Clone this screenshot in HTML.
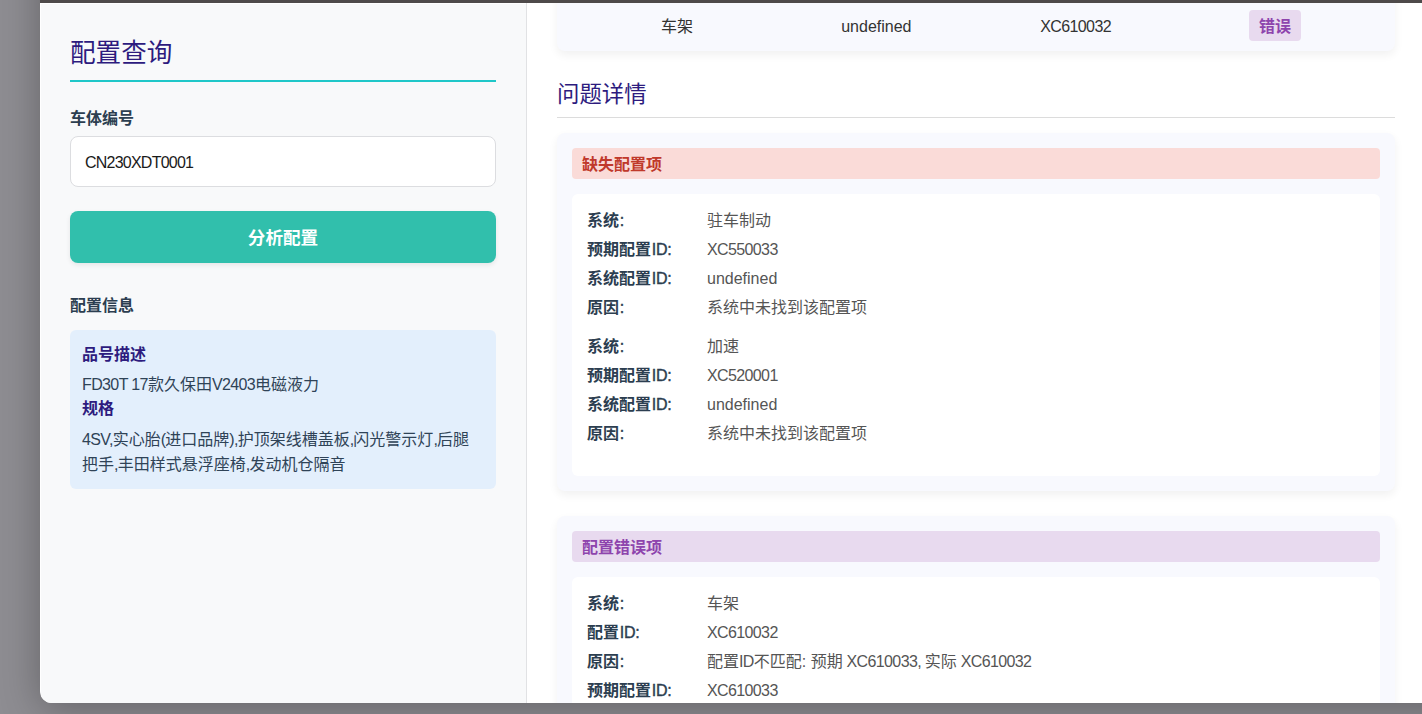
<!DOCTYPE html>
<html lang="zh-CN">
<head>
<meta charset="utf-8">
<title>配置查询</title>
<style>
*{box-sizing:border-box;margin:0;padding:0}
html,body{width:1422px;height:714px;overflow:hidden}
body{position:relative;background:#8e8d92;font-family:"Liberation Sans","Noto Sans CJK SC",sans-serif;font-size:16px;line-height:25.6px;color:#2c3e50}
.u{letter-spacing:-.62px}
.q{letter-spacing:-.75px}
b .u{font-weight:400;-webkit-text-stroke:.4px currentColor;margin-left:.8px;letter-spacing:-.3px}
.cj{font-family:"Liberation Sans","Noto Sans CJK SC",sans-serif;white-space:nowrap}
.modal{position:absolute;left:40px;top:-60px;width:1460px;height:762.6px;background:#fff;border-radius:12px;box-shadow:0 6px 40px rgba(0,0,0,.30);overflow:hidden}
.mhead{position:absolute;left:0;top:0;width:100%;height:62.8px;background:#4e4a4a;z-index:5}
/* everything below is positioned in viewport coordinates through .vp */
.vp{position:absolute;left:-40px;top:60px;width:1500px;height:703px}
.left{position:absolute;left:41px;top:4px;width:485px;height:700px;background:#f8f9fa}
.divider{position:absolute;left:526px;top:3px;width:1px;height:700px;background:#e1e2e4}
h2.title{position:absolute;left:70px;top:31px;width:426px;height:51px;font-size:25.6px;line-height:45px;font-weight:400;color:#2d1b7e;border-bottom:2px solid #1fc7c8}
.lbl{position:absolute;left:70px;font-weight:700;color:#2c3e50;font-size:16px;line-height:26px}
.input{position:absolute;left:70px;top:136px;width:426px;height:50.6px;border:1px solid #dcdde0;border-radius:8px;background:#fff;padding:0 14px;line-height:52.8px;color:#1a1a1a;font-size:16px;overflow:hidden}
.input .u{letter-spacing:-.77px}
.btn{position:absolute;left:70px;top:211px;width:426px;height:52px;border-radius:8px;background:#31bfac;color:#fff;font-weight:700;font-size:17.6px;line-height:54.4px;text-align:center;box-shadow:0 2px 5px rgba(0,0,0,.08)}
.info{position:absolute;left:70px;top:330px;width:426px;height:159px;border-radius:6px;background:#e3effc}
.info .h{position:absolute;left:12px;font-weight:700;color:#2d1b7e;line-height:26px}
.info .p{position:absolute;left:12px;width:402px;color:#2f4357;line-height:24.7px;white-space:nowrap}
.card{position:absolute;left:557px;width:838px;background:#f8f9fe;border-radius:8px;box-shadow:0 4px 10px rgba(0,0,0,.06)}
.trow{position:absolute;left:20.4px;top:0;width:797.2px;height:100%;display:flex}
.trow div{flex:1;text-align:center;line-height:26px;color:#333}
.badge{display:inline-block;width:52px;height:31px;line-height:33px;border-radius:4px;background:#e8daef;color:#8e44ad;font-weight:700}
h3.sec{position:absolute;left:557px;top:74.7px;width:838px;height:43.3px;font-size:22.4px;line-height:40px;font-weight:400;color:#2d1b7e;border-bottom:1px solid #dcdcdc}
.chead{position:absolute;left:15px;top:15px;width:808px;height:31px;border-radius:4px;padding-left:10px;line-height:33px;font-weight:700}
.red{background:#fadbd8;color:#c0392b}
.pur{background:#e8daef;color:#8e44ad}
.box{position:absolute;left:15px;top:61px;width:808px;background:#fff;border-radius:6px}
.row{position:absolute;left:15px;width:780px;height:26px;line-height:26px;white-space:nowrap}
.row b{display:inline-block;width:120px;font-weight:700;color:#2c3e50}
.row>span{color:#555}
</style>
</head>
<body>
<div class="modal">
 <div class="mhead"></div>
 <div class="vp">
  <div class="left"></div>
  <div class="divider"></div>

  <h2 class="title"><span class="cj">配置查询</span></h2>
  <div class="lbl" style="top:106px"><span class="cj">车体编号</span></div>
  <div class="input"><span class="u">CN230XDT0001</span></div>
  <div class="btn"><span class="cj">分析配置</span></div>
  <div class="lbl" style="top:293.2px"><span class="cj">配置信息</span></div>
  <div class="info">
   <div class="h" style="top:11.5px"><span class="cj">品号描述</span></div>
   <div class="p" style="top:43.3px"><span class="u">FD30T 17</span><span class="cj">款久保田</span><span class="u">V2403</span><span class="cj">电磁液力</span></div>
   <div class="h" style="top:66.2px"><span class="cj">规格</span></div>
   <div class="p" style="top:97.8px"><span class="u">4SV,</span><span class="cj">实心胎</span><span class="q">(</span><span class="cj">进口品牌</span><span class="q">),</span><span class="cj">护顶架线槽盖板</span><span class="q">,</span><span class="cj">闪光警示灯</span><span class="q">,</span><span class="cj">后腿</span><br><span class="cj">把手</span><span class="q">,</span><span class="cj">丰田样式悬浮座椅</span><span class="q">,</span><span class="cj">发动机仓隔音</span></div>
  </div>

  <div class="card" style="top:-20px;height:70.5px">
   <div class="trow" style="padding-top:34px">
    <div><span class="cj">车架</span></div><div>undefined</div><div><span class="u">XC610032</span></div><div style="margin-top:-4px"><span class="badge"><span class="cj">错误</span></span></div>
   </div>
  </div>

  <h3 class="sec"><span class="cj">问题详情</span></h3>

  <div class="card" style="top:133px;height:357.5px">
   <div class="chead red"><span class="cj">缺失配置项</span></div>
   <div class="box" style="height:281.5px">
    <div class="row" style="top:13.8px"><b><span class="cj">系统</span><span class="u">:</span></b><span><span class="cj">驻车制动</span></span></div>
    <div class="row" style="top:42.8px"><b><span class="cj">预期配置</span><span class="u">ID:</span></b><span><span class="u">XC550033</span></span></div>
    <div class="row" style="top:71.8px"><b><span class="cj">系统配置</span><span class="u">ID:</span></b><span>undefined</span></div>
    <div class="row" style="top:100.8px"><b><span class="cj">原因</span><span class="u">:</span></b><span><span class="cj">系统中未找到该配置项</span></span></div>
    <div class="row" style="top:139.8px"><b><span class="cj">系统</span><span class="u">:</span></b><span><span class="cj">加速</span></span></div>
    <div class="row" style="top:168.8px"><b><span class="cj">预期配置</span><span class="u">ID:</span></b><span><span class="u">XC520001</span></span></div>
    <div class="row" style="top:197.8px"><b><span class="cj">系统配置</span><span class="u">ID:</span></b><span>undefined</span></div>
    <div class="row" style="top:226.8px"><b><span class="cj">原因</span><span class="u">:</span></b><span><span class="cj">系统中未找到该配置项</span></span></div>
   </div>
  </div>

  <div class="card" style="top:516px;height:300px">
   <div class="chead pur"><span class="cj">配置错误项</span></div>
   <div class="box" style="height:220px">
    <div class="row" style="top:13.8px"><b><span class="cj">系统</span><span class="u">:</span></b><span><span class="cj">车架</span></span></div>
    <div class="row" style="top:42.8px"><b><span class="cj">配置</span><span class="u">ID:</span></b><span><span class="u">XC610032</span></span></div>
    <div class="row" style="top:71.8px"><b><span class="cj">原因</span><span class="u">:</span></b><span><span class="cj">配置</span><span class="u">ID</span><span class="cj">不匹配</span>: <span class="cj">预期</span><span class="u"> XC610033, </span><span class="cj">实际</span><span class="u"> XC610032</span></span></div>
    <div class="row" style="top:100.8px"><b><span class="cj">预期配置</span><span class="u">ID:</span></b><span><span class="u">XC610033</span></span></div>
    <div class="row" style="top:129.8px"><b><span class="cj">实际配置</span><span class="u">ID:</span></b><span><span class="u">XC610032</span></span></div>
   </div>
  </div>
 </div>
</div>
</body>
</html>
